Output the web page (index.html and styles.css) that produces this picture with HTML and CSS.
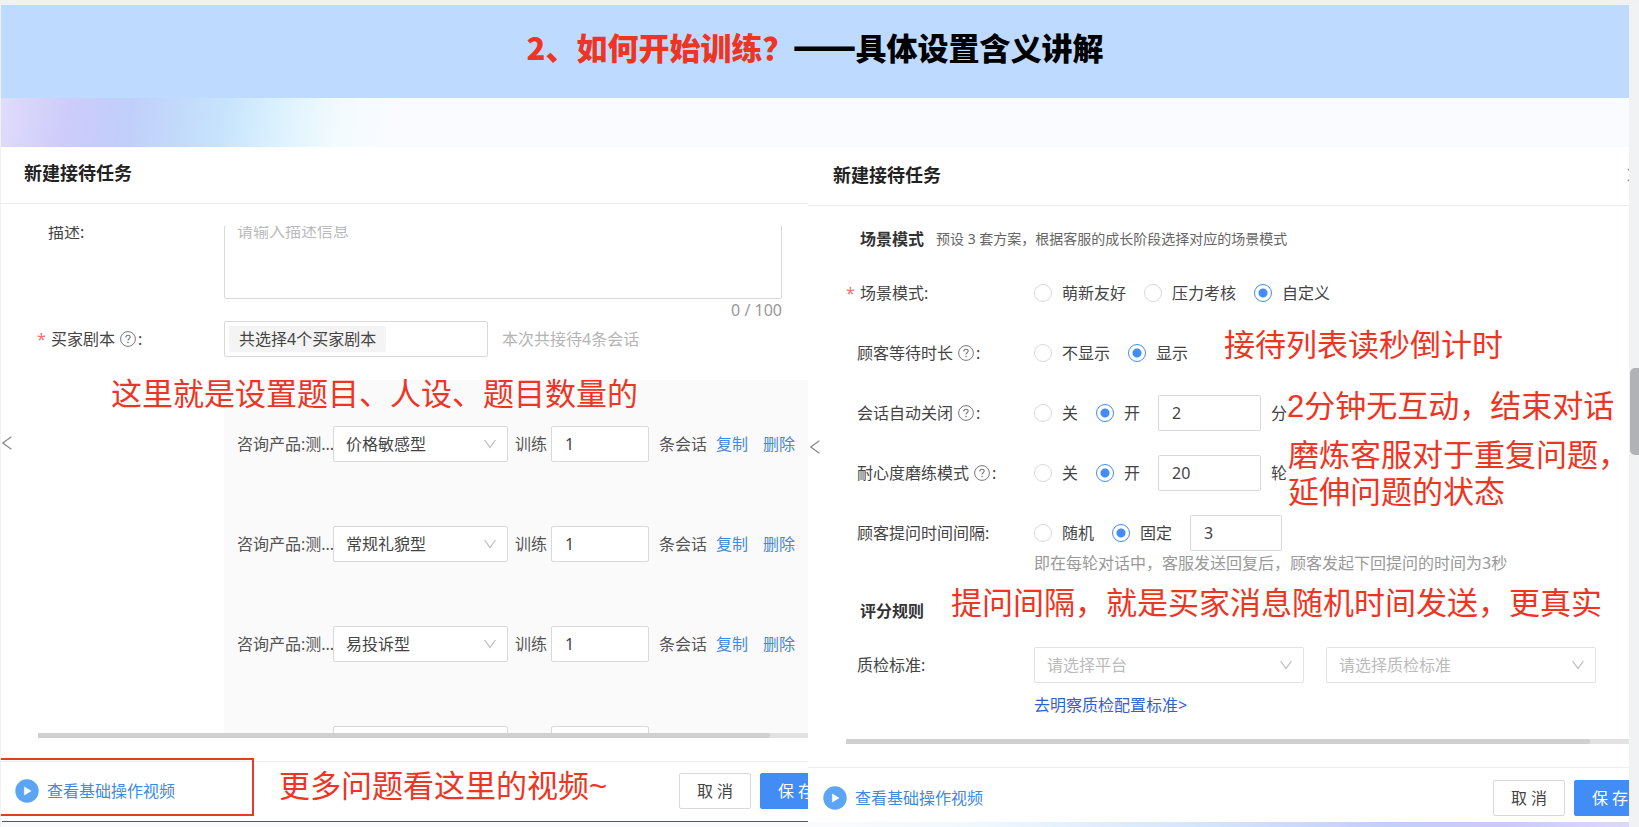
FILE: index.html
```html
<!DOCTYPE html>
<html lang="zh-CN">
<head>
<meta charset="utf-8">
<title>如何开始训练</title>
<link rel="stylesheet" href="styles.css">
</head>
<body>
<svg class="defs" aria-hidden="true">
  <symbol id="help" viewBox="0 0 16 16"><circle cx="8" cy="8" r="7.4" fill="none" stroke="#777" stroke-width="1"/><path d="M5.8 6.4C5.8 5 6.7 4.2 8 4.2s2.2.8 2.2 1.9c0 1.6-2.2 1.6-2.2 3.3" fill="none" stroke="#777" stroke-width="1.1"/><circle cx="8" cy="11.5" r=".8" fill="#777"/></symbol>
  <symbol id="down" viewBox="0 0 12 10"><path d="M.6 1 6 8.6 11.4 1" fill="none" stroke="#b8b8b8" stroke-width="1.1"/></symbol>
  <symbol id="left" viewBox="0 0 10 14"><path d="M9.4.8.8 7l8.6 6.2" fill="none" stroke="#888" stroke-width="1.2"/></symbol>
  <symbol id="play" viewBox="0 0 24 24"><circle cx="12" cy="12" r="11.7" fill="#5ca4f4"/><path d="M9.4 8v8l6.6-4z" fill="#fff" stroke="#fff" stroke-width=".6" stroke-linejoin="round"/></symbol>
  <symbol id="close" viewBox="0 0 14 14"><path d="M1 1l12 12M13 1 1 13" fill="none" stroke="#888" stroke-width="1.3"/></symbol>
</svg>
<div class="page">
  <main class="doc">
    <h1 class="banner"><span class="banner-key">2、如何开始训练？</span><span class="dash">——</span>具体设置含义讲解</h1>
    <div class="glow"></div>
    <div class="panels">
      <section class="panel panel-script">
        <header class="panel-head"><h2>新建接待任务</h2></header>
        <div class="scroll">
          <div class="field field-desc">
            <label class="name" for="desc">描述:</label>
            <div class="desc">
              <textarea id="desc" placeholder="请输入描述信息"></textarea>
              <span class="count">0 / 100</span>
            </div>
          </div>
          <div class="field">
            <span class="name required"><span class="star">*</span>买家剧本<svg class="help"><use href="#help"/></svg>:</span>
            <div class="picker"><span class="tag">共选择4个买家剧本</span></div>
            <span class="muted picker-note">本次共接待4条会话</span>
          </div>
          <div class="scripts">
            <div class="script">
              <label class="product" for="t1">咨询产品:测...</label>
              <div class="select"><select id="t1"><option>价格敏感型</option></select><svg><use href="#down"/></svg></div>
              <label class="train" for="n1">训练</label><input class="text" id="n1" value="1">
              <span class="unit">条会话</span><a href="#copy">复制</a><a class="remove" href="#remove">删除</a>
            </div>
            <div class="script">
              <label class="product" for="t2">咨询产品:测...</label>
              <div class="select"><select id="t2"><option>常规礼貌型</option></select><svg><use href="#down"/></svg></div>
              <label class="train" for="n2">训练</label><input class="text" id="n2" value="1">
              <span class="unit">条会话</span><a href="#copy">复制</a><a class="remove" href="#remove">删除</a>
            </div>
            <div class="script">
              <label class="product" for="t3">咨询产品:测...</label>
              <div class="select"><select id="t3"><option>易投诉型</option></select><svg><use href="#down"/></svg></div>
              <label class="train" for="n3">训练</label><input class="text" id="n3" value="1">
              <span class="unit">条会话</span><a href="#copy">复制</a><a class="remove" href="#remove">删除</a>
            </div>
            <div class="script">
              <span class="product"></span>
              <div class="select"><select aria-label="买家类型"><option></option></select></div>
              <span class="train"></span><input class="text" aria-label="会话数">
            </div>
          </div>
        </div>
        <div class="track"><div class="thumb"></div></div>
        <footer class="panel-foot">
          <a class="video" href="#video"><svg><use href="#play"/></svg>查看基础操作视频</a>
          <button class="btn" type="button">取 消</button>
          <button class="btn primary" type="button">保 存</button>
          <div class="frame"></div>
        </footer>
        <button class="fold" type="button" aria-label="收起"><svg><use href="#left"/></svg></button>
        <p class="note note-script">这里就是设置题目、人设、题目数量的</p>
        <p class="note note-video">更多问题看这里的视频~</p>
      </section>

      <section class="panel panel-rules">
        <header class="panel-head"><h2>新建接待任务</h2><button class="close" type="button" aria-label="关闭"><svg><use href="#close"/></svg></button></header>
        <div class="scroll">
          <div class="group"><h3>场景模式</h3><span class="group-note">预设 3 套方案，根据客服的成长阶段选择对应的场景模式</span></div>
          <div class="field" role="radiogroup" aria-label="场景模式">
            <span class="name required"><span class="star">*</span>场景模式:</span>
            <div class="options">
              <label><input type="radio" name="mode">萌新友好</label>
              <label><input type="radio" name="mode">压力考核</label>
              <label><input type="radio" name="mode" checked>自定义</label>
            </div>
          </div>
          <div class="field" role="radiogroup" aria-label="顾客等待时长">
            <span class="name">顾客等待时长<svg class="help"><use href="#help"/></svg>:</span>
            <div class="options">
              <label><input type="radio" name="wait">不显示</label>
              <label><input type="radio" name="wait" checked>显示</label>
            </div>
          </div>
          <div class="field" role="radiogroup" aria-label="会话自动关闭">
            <span class="name">会话自动关闭<svg class="help"><use href="#help"/></svg>:</span>
            <div class="options">
              <label><input type="radio" name="auto">关</label>
              <label><input type="radio" name="auto" checked>开</label>
              <label><input class="text" value="2">分</label>
            </div>
          </div>
          <div class="field" role="radiogroup" aria-label="耐心度磨练模式">
            <span class="name">耐心度磨练模式<svg class="help"><use href="#help"/></svg>:</span>
            <div class="options">
              <label><input type="radio" name="patience">关</label>
              <label><input type="radio" name="patience" checked>开</label>
              <label><input class="text" value="20">轮</label>
            </div>
          </div>
          <div>
            <div class="field" role="radiogroup" aria-label="顾客提问时间间隔">
              <span class="name">顾客提问时间间隔:</span>
              <div class="options">
                <label><input type="radio" name="gap">随机</label>
                <label><input type="radio" name="gap" checked>固定</label>
                <input class="text short" aria-label="间隔秒数" value="3">
              </div>
            </div>
            <p class="hint">即在每轮对话中，客服发送回复后，顾客发起下回提问的时间为3秒</p>
          </div>
          <div class="group"><h3>评分规则</h3></div>
          <div>
            <div class="field">
              <label class="name" for="platform">质检标准:</label>
              <div class="pair">
                <div class="select empty"><select id="platform"><option>请选择平台</option></select><svg><use href="#down"/></svg></div>
                <div class="select empty"><select aria-label="质检标准"><option>请选择质检标准</option></select><svg><use href="#down"/></svg></div>
              </div>
            </div>
            <a class="config" href="#config">去明察质检配置标准&gt;</a>
          </div>
        </div>
        <div class="track"><div class="thumb"></div></div>
        <footer class="panel-foot">
          <a class="video" href="#video"><svg><use href="#play"/></svg>查看基础操作视频</a>
          <button class="btn" type="button">取 消</button>
          <button class="btn primary" type="button">保 存</button>
        </footer>
        <button class="fold" type="button" aria-label="收起"><svg><use href="#left"/></svg></button>
        <p class="note note-wait">接待列表读秒倒计时</p>
        <p class="note note-close">2分钟无互动，结束对话</p>
        <p class="note note-patience">磨炼客服对于重复问题，<br>延伸问题的状态</p>
        <p class="note note-gap">提问间隔，就是买家消息随机时间发送，更真实</p>
      </section>
    </div>
  </main>
  <div class="rail"><div class="rail-thumb"></div></div>
</div>
</body>
</html>
```

FILE: styles.css
```css
* { box-sizing: border-box; }
body {
  margin: 0;
  background: #f0f1f3;
  color: #444;
  font: 16px/24px "Noto Sans", "Noto Sans CJK SC", sans-serif;
}
h1, h2, h3, p { margin: 0; }
a { color: #4589dc; text-decoration: none; }
input, select, textarea, button { font: inherit; color: inherit; }
svg { display: block; flex: none; }
.defs { position: absolute; width: 0; height: 0; }

.page { display: flex; height: 100vh; padding: 5px 0 0 1px; }
.doc { flex: 1; min-width: 0; display: flex; flex-direction: column; background: #fff; }
.banner {
  padding: 22px 0 31px;
  background: #bfdaff;
  color: #000;
  font: 900 31px/40px "Noto Sans CJK SC", sans-serif;
  text-align: center;
}
.banner-key { color: #ee3524; }
.dash { -webkit-text-stroke: 3px #000; }
.glow {
  height: 49px;
  background: linear-gradient(98deg, #e0dcfb 0, #cdcbfa 70px, #c0cffa 130px, #c6e3fc 220px, #e0f4fe 290px, #f3fbfe 340px, #fafbff 400px);
}

.panels { flex: 1; min-height: 0; display: grid; grid-template-columns: 807fr 821fr; }
.panel { position: relative; min-width: 0; display: flex; flex-direction: column; overflow: hidden; }
.panel-head { display: flex; align-items: center; justify-content: space-between; border-bottom: 1px solid #eee; padding: 14px 0 18px 23px; }
.panel-head h2 { color: #222; font-size: 18px; line-height: 24px; font-weight: 700; }
.scroll { flex: 1; min-height: 0; overflow: hidden; display: flex; flex-direction: column; padding-left: 47px; }
.scroll > * { flex: none; }
.track { height: 5px; margin-left: 37px; background: #e2e2e2; }
.thumb { width: 95%; height: 100%; border-radius: 0 3px 3px 0; background: #d0d0d0; }
.panel-foot { position: relative; display: flex; align-items: center; gap: 9px; margin: 23px 0 5px; border-top: 1px solid #eee; padding: 11px 0 13px 14px; }

.field { display: flex; align-items: center; min-height: 36px; }
.name { flex: none; width: 176px; display: flex; align-items: center; }
.required { margin-left: -11px; width: 187px; }
.star { width: 14px; color: #f0706c; }
.help { width: 16px; height: 16px; margin: 0 2px 0 5px; }
.text { width: 98px; height: 36px; border: 1px solid #d9d9d9; border-radius: 2px; padding: 0 13px; background: #fff; }
.select { position: relative; flex: none; width: 175px; }
.select select { display: block; width: 100%; height: 36px; border: 1px solid #d9d9d9; border-radius: 2px; padding: 0 12px; background: #fff; appearance: none; }
.select svg { position: absolute; right: 12px; top: 13px; width: 12px; height: 10px; pointer-events: none; }
.empty select { border-color: #e2e2e2; color: #bbb; }
.muted { color: #b5b5b5; }

.panel-script { background: linear-gradient(#fff, #fff) top / 100% calc(100% - 5px) no-repeat, #f9fbff; }
.panel-script .scroll { margin-top: 22px; }
.field-desc { align-items: flex-start; margin-top: -20px; }
.field-desc .name { padding-top: 14px; }
.desc { flex: 1; margin-right: 26px; display: flex; flex-direction: column; }
.desc textarea { display: block; height: 93px; border: 1px solid #d9d9d9; border-radius: 2px; padding: 12px 12px; resize: none; }
.desc textarea::placeholder { color: #bbb; }
.count { align-self: flex-end; line-height: 22px; color: #999; }
.picker { width: 264px; height: 36px; border: 1px solid #d9d9d9; border-radius: 2px; padding: 4px; }
.tag { display: inline-block; border-radius: 2px; padding: 1px 10px; background: #f4f4f4; }
.picker-note { margin-left: 14px; }
.scripts { display: flex; flex-direction: column; gap: 64px; margin: 23px 0 0 176px; padding: 46px 0 0 13px; background: #fafafa; }
.script { flex: none; display: flex; align-items: center; height: 36px; white-space: nowrap; color: #555; }
.product { flex: none; width: 96px; }
.train { flex: none; width: 32px; margin: 0 4px 0 7px; }
.unit { margin: 0 9px 0 10px; }
.remove { margin-left: 15px; }
.script select, .script .text { color: #444; }

.video { flex: 1; display: flex; align-items: center; gap: 8px; }
.video svg { width: 24px; height: 24px; }
.btn { flex: none; width: 72px; height: 36px; border: 1px solid #d9d9d9; border-radius: 2px; padding: 0; background: #fff; }
.primary { border-color: #428df5; background: #428df5; color: #fff; }
.panel-script .panel-foot::after {
  content: "";
  position: absolute;
  left: 1px; right: 0; bottom: 0;
  height: 1px;
  background: #55595f;
}
.panel-script .primary { margin-right: -24px; }
.frame { position: absolute; left: -2px; top: -4px; width: 255px; height: 58px; border: 2px solid #e8392f; }

.panel-rules .panel-head { padding: 16px 0 18px 25px; }
.close { margin-right: -12px; border: 0; padding: 0; background: none; }
.close svg { width: 14px; height: 14px; }
.panel-rules .scroll { gap: 24px; padding: 21px 33px 0 49px; }
.panel-rules .name { width: 177px; }
.panel-rules .required { width: 188px; }
.group { display: flex; gap: 12px; padding-left: 3px; }
.group h3 { color: #333; font-size: 16px; line-height: 24px; font-weight: 700; }
.group-note { color: #666; font-size: 14px; }
.options { display: flex; align-items: center; gap: 18px; }
.options label { display: flex; align-items: center; gap: 10px; }
.options .text { width: 103px; }
.options .short { width: 92px; }
input[type="radio"] { appearance: none; flex: none; width: 18px; height: 18px; margin: 0; border: 1px solid #d9d9d9; border-radius: 50%; background: #fff; }
input[type="radio"]:checked { border-color: #428df5; background: radial-gradient(circle, #428df5 4px, #fff 5px); }
.hint { padding-left: 177px; color: #999; }
.pair { flex: 1; display: grid; grid-template-columns: 1fr 1fr; gap: 22px; }
.pair .select { width: auto; }
.config { display: inline-block; margin: 10px 0 0 177px; color: #2f62d0; }
.panel-rules .track { margin-left: 38px; }
.panel-rules .panel-foot { padding: 12px 0 6px 15px; }
.panel-rules .primary { margin-right: -17px; }
.panel-rules { background: linear-gradient(#fff, #fff) top / 100% calc(100% - 5px) no-repeat, linear-gradient(90deg, #fafbff 0, #f0f8ff 20%, #d2e3fd 50%, #c3cefb 70%, #cac9fa 85%, #ddd8fc 100%); }

.fold { position: absolute; left: 1px; top: 289px; border: 0; padding: 0; background: none; }
.fold svg { width: 10px; height: 14px; }
.panel-rules .fold { left: 2px; top: 293px; }

/* Red explanations laid over the two forms */
.note { position: absolute; color: #ee3524; font: 31px/37px "Liberation Sans", "Noto Sans CJK SC", sans-serif; white-space: nowrap; }
.note-script { left: 110px; top: 229px; }
.note-video { left: 278px; top: 621px; }
.note-wait { left: 416px; top: 180px; }
.note-close { left: 479px; top: 241px; }
.note-patience { left: 480px; top: 290px; }
.note-gap { left: 143px; top: 438px; }

.rail { flex: none; width: 10px; padding: 363px 0 0 1px; background: #f1f2f4; }
.rail-thumb { height: 87px; border-radius: 5px 0 0 5px; background: #b0b2b5; }
```
